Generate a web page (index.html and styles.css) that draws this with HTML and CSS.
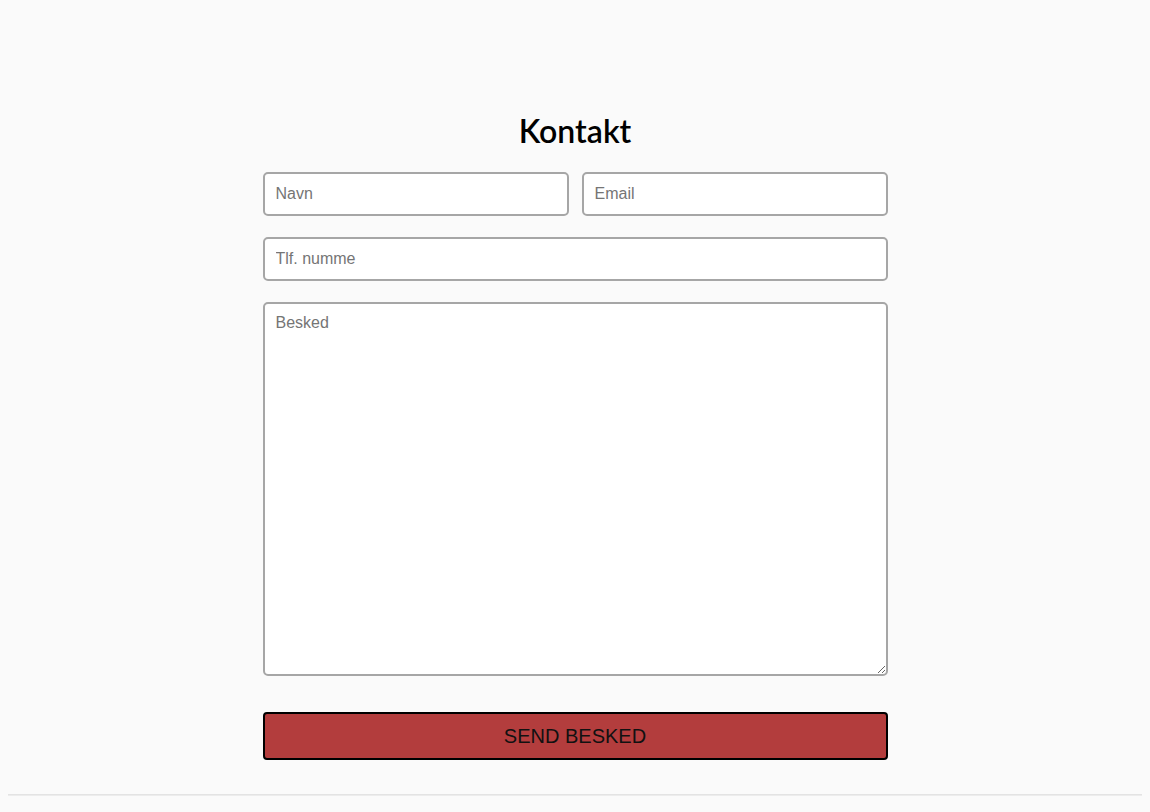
FILE: index.html
```html
<!DOCTYPE html>
<html lang="da">
<head>
<meta charset="utf-8">
<title>Kontakt</title>
<link rel="stylesheet" href="styles.css">
</head>
<body>
<main class="contact">
  <h1 class="contact-title">Kontakt</h1>
  <form class="contact-form">
    <div class="row-two">
      <input class="field" type="text" placeholder="Navn">
      <input class="field" type="email" placeholder="Email">
    </div>
    <input class="field" type="tel" placeholder="Tlf. numme">
    <textarea class="field message" placeholder="Besked"></textarea>
    <button class="send" type="button">SEND BESKED</button>
  </form>
</main>
<hr class="divider">
</body>
</html>
```
FILE: styles.css
```css
html, body {
  background: #fafafa;
}
body {
  margin: 8px;
  font-family: "Liberation Sans", Arial, sans-serif;
}
.contact {
  width: 625px;
  margin: 0 auto;
  padding: 104px 0 34px;
}
.contact-title {
  margin: 0 0 22px;
  font-family: Lato, "Noto Sans", sans-serif;
  font-weight: 600;
  font-size: 32px;
  line-height: 1.2;
  text-align: center;
  color: #000;
}
.contact-form {
  display: flex;
  flex-direction: column;
  gap: 21px;
}
.row-two {
  display: grid;
  grid-template-columns: 1fr 1fr;
  gap: 13px;
}
.field {
  display: block;
  box-sizing: border-box;
  width: 100%;
  height: 44px;
  margin: 0;
  padding: 0 11px;
  border: 2px solid #a6a6a6;
  border-radius: 5px;
  background: #fff;
  font-family: "Liberation Sans", Arial, sans-serif;
  font-size: 16px;
  color: #000;
  outline: none;
}
.field::placeholder {
  color: #757575;
}
.message {
  height: 374px;
  padding: 10px 11px;
  resize: vertical;
}
.send {
  display: block;
  box-sizing: border-box;
  width: 100%;
  height: 48px;
  margin-top: 15px;
  border: 2px solid #000;
  border-radius: 4px;
  background: #b33d3d;
  color: #111;
  font-family: "Liberation Sans", Arial, sans-serif;
  font-size: 20px;
}
.divider {
  margin: 0;
  border: 0;
  border-top: 1px solid #e3e3e3;
  border-bottom: 1px solid #ececec;
}
```
